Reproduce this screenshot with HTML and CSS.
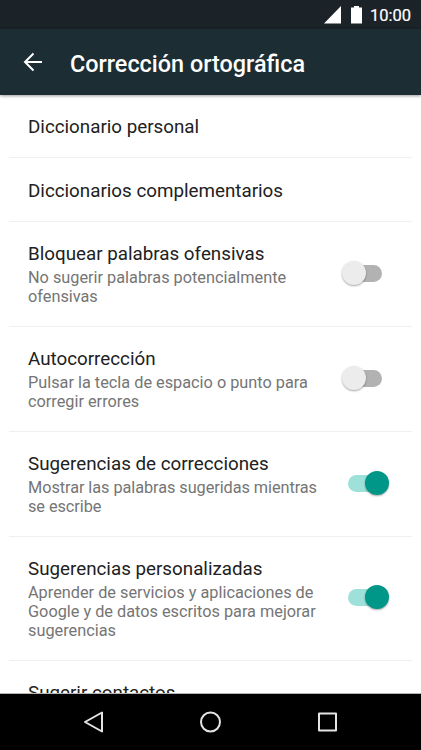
FILE: index.html
```html
<!DOCTYPE html>
<html lang="es">
<head>
<meta charset="utf-8">
<title>Corrección ortográfica</title>
<link rel="stylesheet" href="styles.css">
</head>
<body>
<div class="phone">
  <div class="status">
    <svg class="signal" width="17" height="18" viewBox="0 0 17 18"><path d="M17 0V17.5H0Z"/></svg>
    <svg class="battery" width="11" height="18" viewBox="0 0 11 18"><path d="M3 0h5v1.5h3v16H0v-16h3z"/></svg>
    <span class="clock">10:00</span>
  </div>
  <header class="bar">
    <svg class="back" width="20" height="20" viewBox="0 0 20 20"><path d="M19 10H2M10.5 1.5L2 10L10.500 18.500"/></svg>
    <h1>Corrección ortográfica</h1>
  </header>
  <main class="list">
    <section class="row single"><h2>Diccionario personal</h2></section>
    <section class="row single second"><h2>Diccionarios complementarios</h2></section>
    <section class="row"><div><h2>Bloquear palabras ofensivas</h2><p>No sugerir palabras potencialmente<br>ofensivas</p></div><span class="switch"></span></section>
    <section class="row"><div><h2>Autocorrección</h2><p>Pulsar la tecla de espacio o punto para<br>corregir errores</p></div><span class="switch"></span></section>
    <section class="row"><div><h2>Sugerencias de correcciones</h2><p class="tight">Mostrar las palabras sugeridas mientras<br>se escribe</p></div><span class="switch on"></span></section>
    <section class="row tall"><div><h2>Sugerencias personalizadas</h2><p>Aprender de servicios y aplicaciones de<br>Google y de datos escritos para mejorar<br>sugerencias</p></div><span class="switch on"></span></section>
    <section class="row single"><h2>Sugerir contactos</h2></section>
  </main>
  <nav class="nav">
    <svg width="24" height="24" viewBox="0 0 24 24"><path d="M20 2.500V21.500L3 12Z"/></svg>
    <svg width="24" height="24" viewBox="0 0 24 24"><circle cx="11.5" cy="12" r="9.500"/></svg>
    <svg width="24" height="24" viewBox="0 0 24 24"><rect x="3" y="3.500" width="17" height="17"/></svg>
  </nav>
</div>
</body>
</html>
```
FILE: styles.css
```css
* { box-sizing: border-box; margin: 0; padding: 0; }
body { font-family: Roboto, sans-serif; background: #fff; }
.phone { width: 421px; height: 750px; display: flex; flex-direction: column; overflow: hidden; }
.status { height: 29px; flex: none; background: #1b2228; display: flex; align-items: center; padding: 1px 10px 0 0; justify-content: flex-end; }
.status svg { fill: #fff; }
.battery { margin-left: 10px; }
.clock { margin-left: 8px; padding-top: 1px; color: #fff; font-size: 16.5px; font-weight: 400; line-height: 20px; -webkit-text-stroke: 0.2px #fff; }
.bar { height: 66px; flex: none; background: #1c2e34; display: flex; align-items: center; padding: 0 0 0 23px; box-shadow: 0 1px 3px rgba(0,0,0,.4); z-index: 1; }
.back { fill: none; stroke: #fff; stroke-width: 2; }
.bar h1 { margin: 3px 0 0 27px; color: #fff; font-size: 23.4px; font-weight: 500; line-height: 30px; white-space: nowrap; }
.list { flex: 1; min-height: 0; overflow: hidden; padding: 0 9px; }
.row { height: 105px; border-bottom: 1px solid #f0f0f0; padding: 20px 30px 0 19px; display: flex; justify-content: space-between; white-space: nowrap; }
.single { height: 63px; }
.second { height: 64px; padding-top: 21px; }
.tall { height: 124px; }
h2 { font-size: 18.8px; font-weight: 400; line-height: 24px; color: #212121; }
p { margin-top: 2px; font-size: 16.3px; line-height: 19.2px; color: #757575; }
.tight { letter-spacing: -0.06px; }
.switch { flex: none; position: relative; width: 34px; height: 17px; margin-top: 23px; border-radius: 9px; background: #b2b2b2; }
.switch::after { content: ""; position: absolute; width: 24px; height: 24px; left: -6px; top: -4px; border-radius: 50%; background: #ececec; box-shadow: 0 1px 2px rgba(0,0,0,.35); }
.on { background: #9de1da; }
.on::after { left: 17px; background: #009688; }
.tall .switch { margin-top: 32px; }
.nav { height: 57px; flex: none; background: #000; border-top: 1px solid #b5b5b5; display: flex; justify-content: center; gap: 93px; align-items: center; }
.nav svg { fill: none; stroke: #e4e4e4; stroke-width: 2; stroke-linejoin: round; }
```
